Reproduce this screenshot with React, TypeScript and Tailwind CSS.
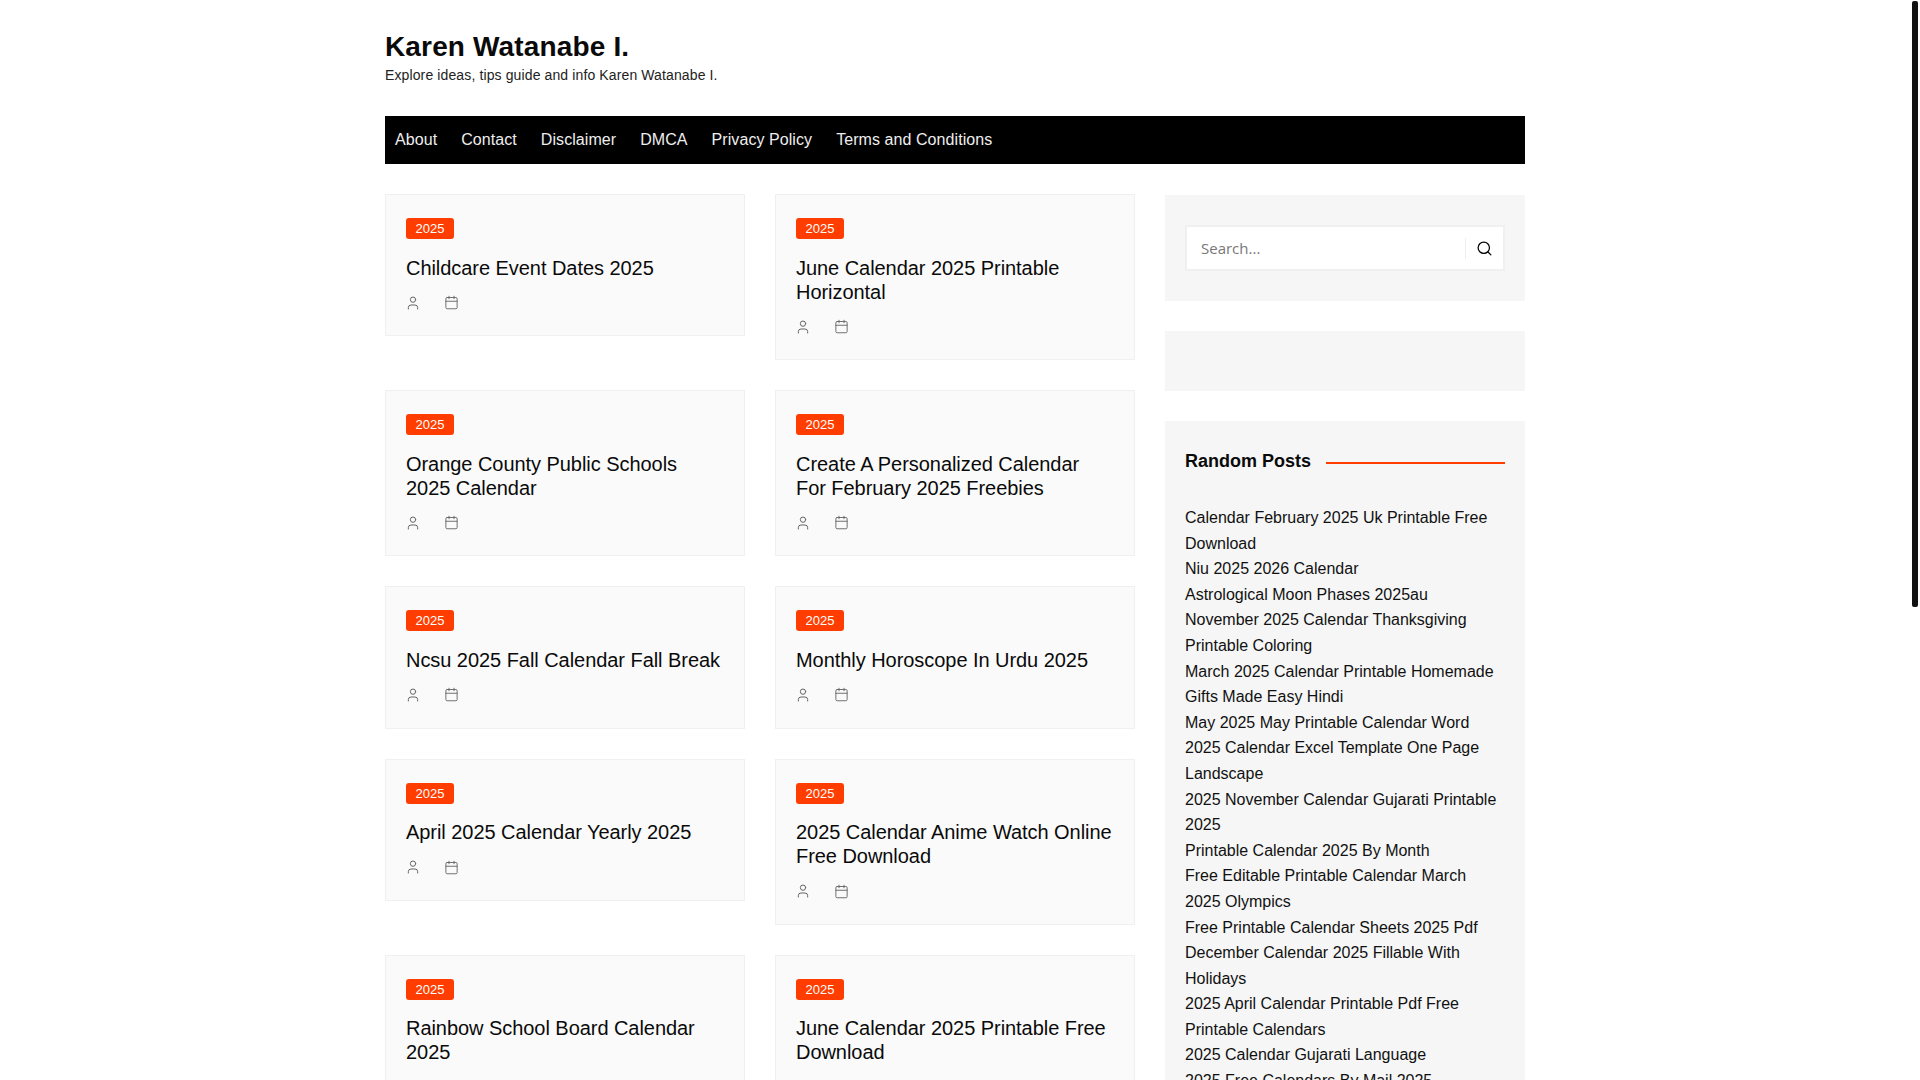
import { Search, User, Calendar } from "lucide-react"

const navItems = ["About", "Contact", "Disclaimer", "DMCA", "Privacy Policy", "Terms and Conditions"]

const posts = [
  "Childcare Event Dates 2025",
  "June Calendar 2025 Printable Horizontal",
  "Orange County Public Schools 2025 Calendar",
  "Create A Personalized Calendar For February 2025 Freebies",
  "Ncsu 2025 Fall Calendar Fall Break",
  "Monthly Horoscope In Urdu 2025",
  "April 2025 Calendar Yearly 2025",
  "2025 Calendar Anime Watch Online Free Download",
  "Rainbow School Board Calendar 2025",
  "June Calendar 2025 Printable Free Download",
]

const randomPosts = [
  "Calendar February 2025 Uk Printable Free Download",
  "Niu 2025 2026 Calendar",
  "Astrological Moon Phases 2025au",
  "November 2025 Calendar Thanksgiving Printable Coloring",
  "March 2025 Calendar Printable Homemade Gifts Made Easy Hindi",
  "May 2025 May Printable Calendar Word",
  "2025 Calendar Excel Template One Page Landscape",
  "2025 November Calendar Gujarati Printable 2025",
  "Printable Calendar 2025 By Month",
  "Free Editable Printable Calendar March 2025 Olympics",
  "Free Printable Calendar Sheets 2025 Pdf",
  "December Calendar 2025 Fillable With Holidays",
  "2025 April Calendar Printable Pdf Free Printable Calendars",
  "2025 Calendar Gujarati Language",
  "2025 Free Calendars By Mail 2025",
]

function PostCard({ title }: { title: string }) {
  return (
    <article className="border border-[#f0f0f0] bg-[#fafafa] px-5 pt-[23px] pb-[25.7px]">
      <span className="block w-fit rounded-[3px] bg-[#ff3d00] px-[9.5px] text-[13px] leading-[21px] text-white">2025</span>
      <h2 className="mt-[16.5px] text-[20px] leading-[24px] tracking-[-0.05px] text-[#0a0a0a]">{title}</h2>
      <div className="mt-[16px] -ml-[1px] flex h-[14px] items-center gap-[23px] text-[#666]">
        <User size={16} strokeWidth={1.5} />
        <Calendar size={15} strokeWidth={1.5} />
      </div>
    </article>
  )
}

export default function App() {
  return (
    <div className="relative h-screen overflow-hidden bg-white font-['Liberation_Sans',Arial,sans-serif]">
      <div className="ml-[385px] w-[1140px]">
        <header className="pt-[29px] pb-[31px]">
          <h1 className="text-[28px] leading-[36px] font-bold tracking-[0.15px] text-[#0a0a0a]">Karen Watanabe I.</h1>
          <p className="text-[14px] leading-[20px] tracking-[0.12px] text-[#222]">Explore ideas, tips guide and info Karen Watanabe I.</p>
        </header>

        <nav className="flex h-[48px] items-center gap-6 bg-black px-[10px]">
          {navItems.map((item) => (
            <a key={item} className="text-[16px] tracking-[0.07px] text-[#eee]">{item}</a>
          ))}
        </nav>

        <div className="mt-[30px] flex gap-[30px]">
          <main className="grid w-[750px] grid-cols-2 items-start gap-[30px]">
            {posts.map((title) => (
              <PostCard key={title} title={title} />
            ))}
          </main>

          <aside className="mt-[1px] flex w-[360px] flex-col gap-[30px]">
            <div className="bg-[#f6f6f6] px-5 py-[30px]">
              <div className="flex h-[46px] items-center border-2 border-[#f0f0f0] bg-white pr-[10px] pl-[14px]">
                <input
                  placeholder="Search..."
                  className="min-w-0 flex-1 bg-transparent font-['Open_Sans',sans-serif] text-[15px] outline-none placeholder:text-[#777]"
                />
                <div className="ml-2 flex h-[21px] items-center border-l border-[#eee] pl-[10px]">
                  <Search size={17} strokeWidth={1.75} className="text-black" />
                </div>
              </div>
            </div>

            <div className="h-[60px] bg-[#f6f6f6]" />

            <div className="bg-[#f6f6f6] px-5 pt-[28px] pb-5">
              <div className="flex items-center gap-[15px]">
                <h3 className="text-[18px] leading-[24px] font-bold text-[#0a0a0a]">Random Posts</h3>
                <div className="mt-[4px] h-[2px] flex-1 bg-[#ff3d00]" />
              </div>
              <ul className="mt-[32px] text-[16px] leading-[25.6px] text-[#111]">
                {randomPosts.map((post) => (
                  <li key={post}>{post}</li>
                ))}
              </ul>
            </div>
          </aside>
        </div>
      </div>

      {/* custom scrollbar thumb */}
      <div className="absolute top-[1px] right-[2px] h-[606px] w-[6px] rounded-[2px] bg-[#111]" />
    </div>
  )
}
